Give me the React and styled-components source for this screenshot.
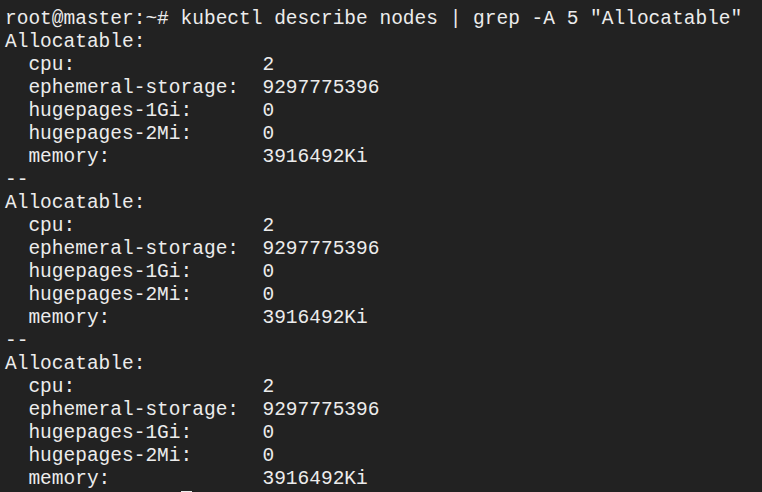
import React from "react";
import styled, { createGlobalStyle } from "styled-components";

const Global = createGlobalStyle`
  html, body { margin: 0; padding: 0; background: #222222; }
  body { overflow: hidden; }
`;

const Terminal = styled.div`
  width: 762px;
  height: 492px;
  box-sizing: border-box;
  background: #222222;
  color: #ececec;
  font-family: "Courier New", "Nimbus Mono PS", "FreeMono", "Liberation Mono", monospace;
  font-size: 19.5px;
  line-height: 23px;
  padding: 8px 0 0 5px;
  overflow: hidden;
`;

const Line = styled.div`
  white-space: pre;
  height: 23px;
`;

const Hidden = styled.span`
  visibility: hidden;
`;

const Cursor = styled.span`
  display: inline-block;
  width: 11.7px;
  height: 21px;
  background: #ececec;
  vertical-align: top;
`;

const block = [
  "Allocatable:",
  "  cpu:                2",
  "  ephemeral-storage:  9297775396",
  "  hugepages-1Gi:      0",
  "  hugepages-2Mi:      0",
  "  memory:             3916492Ki",
];

const lines = [
  'root@master:~# kubectl describe nodes | grep -A 5 "Allocatable"',
  ...block,
  "--",
  ...block,
  "--",
  ...block,
];

export default function App() {
  return (
    <>
      <Global />
      <Terminal>
        {lines.map((l, i) => (
          <Line key={i}>{l}</Line>
        ))}
        <Line>
          <Hidden>root@master:~# </Hidden>
          <Cursor />
        </Line>
      </Terminal>
    </>
  );
}
